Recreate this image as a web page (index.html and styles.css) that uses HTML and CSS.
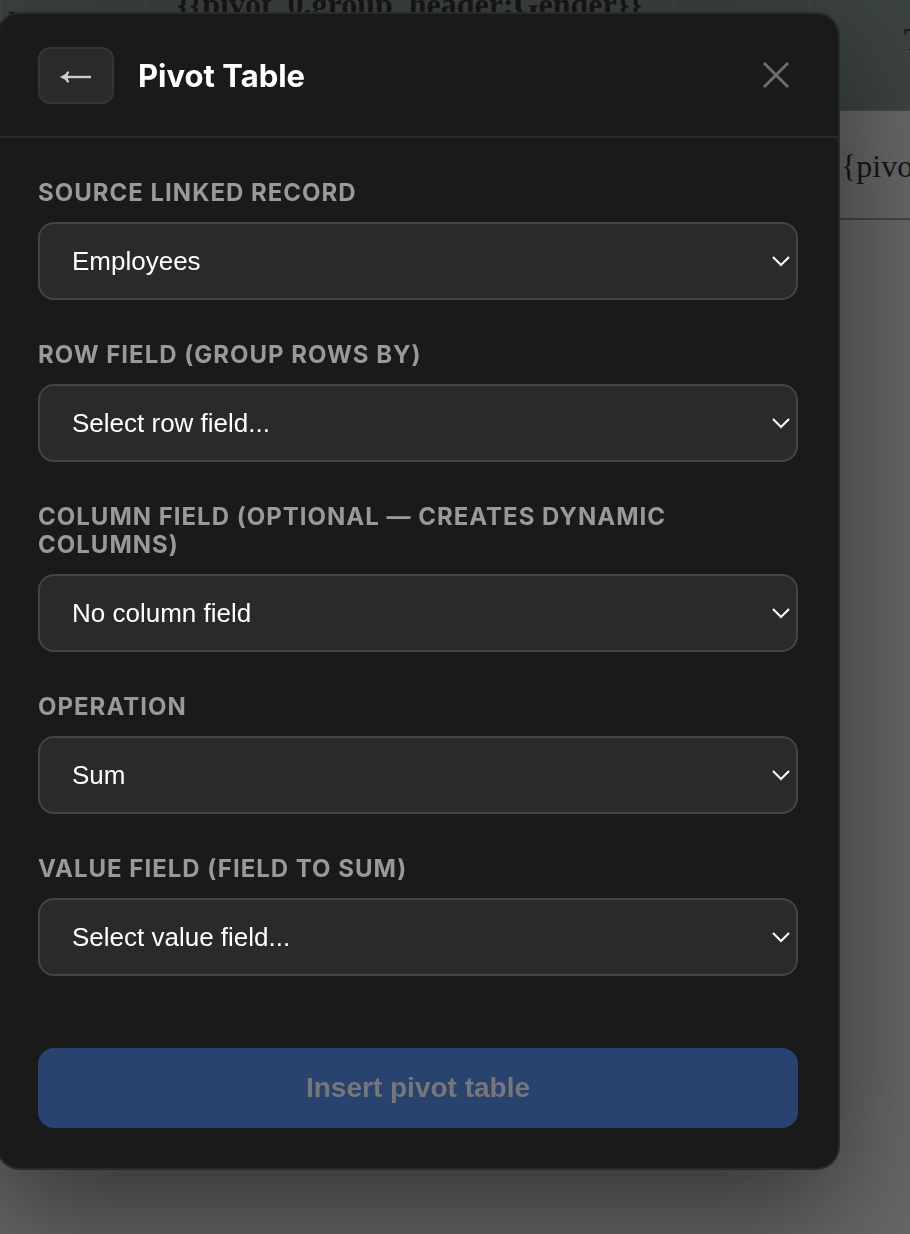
FILE: index.html
```html
<!DOCTYPE html>
<html lang="en">
<head>
  <meta charset="UTF-8">
  <meta name="viewport" content="width=device-width, initial-scale=1.0">
  <title>Pivot Table</title>
  <link rel="stylesheet" href="styles.css">
</head>
<body>
  <main class="document">
    <table class="preview">
      <colgroup>
        <col class="col-row">
        <col class="col-group">
        <col class="col-gap">
        <col class="col-total">
      </colgroup>
      <thead>
        <tr>
          <th class="row-label">r</th>
          <th>{{pivot_0.group_header:Gender}}</th>
          <th></th>
          <th class="total">T</th>
        </tr>
      </thead>
      <tbody>
        <tr>
          <td></td>
          <td></td>
          <td></td>
          <td>{pivot</td>
        </tr>
      </tbody>
    </table>
  </main>

  <div class="backdrop">
    <div class="modal" role="dialog" aria-labelledby="modal-title">
      <div class="modal-header">
        <button type="button" class="back-btn" aria-label="Back">
          <svg width="32" height="16" viewBox="0 0 32 16" fill="none" stroke="currentColor">
            <path d="M5 8H31" stroke-width="2.4"/>
            <path d="M8.4 2.6C7.4 5 5 7 2.4 8C5 9 7.4 11 8.4 13.4" stroke-width="2.2"/>
            <path d="M1 8L8 4.5V11.5Z" fill="currentColor" stroke="none"/>
          </svg>
        </button>
        <h2 id="modal-title">Pivot Table</h2>
        <button type="button" class="close-btn" aria-label="Close">
          <svg width="28" height="28" viewBox="0 0 28 28" fill="none" stroke="currentColor" stroke-width="3">
            <path d="M2 2L26 26M26 2L2 26"/>
          </svg>
        </button>
      </div>

      <form class="modal-body">
        <div class="field">
          <label for="source">Source linked record</label>
          <div class="select-wrap">
            <select id="source">
              <option>Employees</option>
            </select>
            <svg class="chevron" width="18" height="12" viewBox="0 0 18 12"><path d="M1 2L9 10L17 2"/></svg>
          </div>
        </div>
        <div class="field">
          <label for="row-field">Row field (group rows by)</label>
          <div class="select-wrap">
            <select id="row-field">
              <option>Select row field...</option>
            </select>
            <svg class="chevron" width="18" height="12" viewBox="0 0 18 12"><path d="M1 2L9 10L17 2"/></svg>
          </div>
        </div>
        <div class="field">
          <label for="column-field">Column field (optional — creates dynamic columns)</label>
          <div class="select-wrap">
            <select id="column-field">
              <option>No column field</option>
            </select>
            <svg class="chevron" width="18" height="12" viewBox="0 0 18 12"><path d="M1 2L9 10L17 2"/></svg>
          </div>
        </div>
        <div class="field">
          <label for="operation">Operation</label>
          <div class="select-wrap">
            <select id="operation">
              <option>Sum</option>
            </select>
            <svg class="chevron" width="18" height="12" viewBox="0 0 18 12"><path d="M1 2L9 10L17 2"/></svg>
          </div>
        </div>
        <div class="field">
          <label for="value-field">Value field (field to sum)</label>
          <div class="select-wrap">
            <select id="value-field">
              <option>Select value field...</option>
            </select>
            <svg class="chevron" width="18" height="12" viewBox="0 0 18 12"><path d="M1 2L9 10L17 2"/></svg>
          </div>
        </div>
        <button type="submit" class="insert-btn" disabled>Insert pivot table</button>
      </form>
    </div>
  </div>
</body>
</html>
```

FILE: styles.css
```css
* {
  box-sizing: border-box;
}
body {
  margin: 0;
  min-height: 100vh;
  overflow: hidden;
  background-color: #fff;
  font-family: Inter, sans-serif;
}

/* document behind the modal, scrolled part of the way down */
.document {
  margin-top: -34px;
  overflow: hidden;
}
.preview {
  width: 1020px;
  table-layout: fixed;
  border-collapse: collapse;
  font-family: "Liberation Serif", serif;
  font-size: 32px;
  line-height: 36px;
  color: #3a3a3a;
}
.col-row {
  width: 145px;
}
.col-group {
  width: 528px;
}
.col-gap {
  width: 136px;
}
.preview th,
.preview td {
  padding: 18px 30px;
  border: 2px solid #aaa;
  text-align: left;
  vertical-align: top;
  white-space: nowrap;
}
.preview th {
  height: 143px;
  background-color: #94a4a4;
}
.preview td {
  height: 109px;
  padding-top: 20px;
  vertical-align: middle;
}
.preview .row-label {
  padding: 30px 6px;
}
.preview .total {
  padding-left: 93px;
  vertical-align: middle;
}

.backdrop {
  position: fixed;
  inset: 0;
  display: flex;
  align-items: flex-start;
  padding: 12px 70px 64px 0;
  background-color: rgba(0, 0, 0, 0.6);
}
.modal {
  flex: 1;
  margin-left: -4px;
  background-color: #1a1a1a;
  border: 2px solid #2a2a2a;
  border-radius: 24px;
  box-shadow: 0 40px 120px rgba(0, 0, 0, 0.5);
}
.modal-header {
  display: flex;
  align-items: center;
  gap: 24px;
  height: 124px;
  padding: 0 40px;
  border-bottom: 2px solid #2a2a2a;
}
.modal-header h2 {
  flex: 1;
  margin: 0;
  padding-top: 2px;
  font-size: 31px;
  font-weight: 700;
  line-height: 40px;
  color: #fff;
}
.back-btn {
  display: flex;
  align-items: center;
  justify-content: center;
  width: 76px;
  height: 57px;
  padding: 4px 0 0;
  background-color: #2a2a2a;
  border: 2px solid #333636;
  border-radius: 12px;
  color: #ccc;
  cursor: pointer;
}
.close-btn {
  display: flex;
  padding: 8px;
  background: none;
  border: none;
  color: #6c6c6c;
  cursor: pointer;
}

.modal-body {
  display: flex;
  flex-direction: column;
  gap: 41px;
  padding: 41px 40px 40px;
}
.field {
  display: flex;
  flex-direction: column;
  gap: 15px;
}
.field label {
  font-size: 24px;
  font-weight: 700;
  line-height: 28px;
  letter-spacing: 1px;
  text-transform: uppercase;
  color: #999;
}
.select-wrap {
  position: relative;
}
select {
  display: block;
  width: 100%;
  height: 78px;
  padding: 0 32px;
  appearance: none;
  background-color: #2a2a2a;
  border: 2px solid #444;
  border-radius: 16px;
  font-family: "Liberation Sans", Arial, sans-serif;
  font-size: 26px;
  color: #fff;
}
.chevron {
  position: absolute;
  top: 33px;
  right: 8px;
  fill: none;
  stroke: #fff;
  stroke-width: 2;
  pointer-events: none;
}
.insert-btn {
  height: 80px;
  margin-top: 31px;
  background-color: #294371;
  border: none;
  border-radius: 16px;
  font-family: "Liberation Sans", Arial, sans-serif;
  font-size: 28px;
  font-weight: 700;
  color: #777;
}
```
